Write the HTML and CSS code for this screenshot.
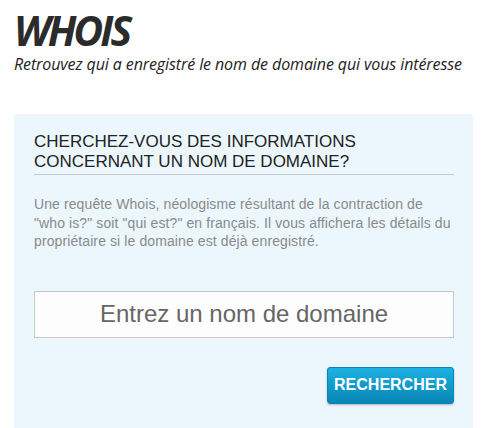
FILE: index.html
```html
<!DOCTYPE html>
<html lang="fr">
<head>
<meta charset="utf-8">
<title>Whois</title>
<link rel="stylesheet" href="styles.css">
</head>
<body>
<header class="head">
  <h1 class="title">WHOIS</h1>
  <p class="subtitle">Retrouvez qui a enregistré le nom de domaine qui vous intéresse</p>
</header>
<section class="panel">
  <h2 class="panel-title">CHERCHEZ-VOUS DES INFORMATIONS CONCERNANT UN NOM DE DOMAINE?</h2>
  <p class="panel-text">Une requête Whois, néologisme résultant de la contraction de "who is?" soit "qui est?" en français. Il vous affichera les détails du propriétaire si le domaine est déjà enregistré.</p>
  <form class="search">
    <input class="search-input" type="text" placeholder="Entrez un nom de domaine">
    <div class="actions">
      <button class="btn" type="button">RECHERCHER</button>
    </div>
  </form>
</section>
</body>
</html>
```
FILE: styles.css
```css
html, body {
  margin: 0;
  padding: 0;
  background: #fff;
}
body {
  padding: 0 18px 0 14px;
  font-family: "Liberation Sans", Arial, sans-serif;
}
.head {
  padding-top: 8px;
}
.title {
  margin: 0;
  font-family: "Open Sans", sans-serif;
  font-weight: 700;
  font-style: italic;
  font-size: 41px;
  line-height: 44px;
  letter-spacing: -3px;
  color: #2b2b2b;
}
.subtitle {
  margin: 2px 0 0;
  font-family: "Open Sans", sans-serif;
  font-style: italic;
  font-size: 16px;
  line-height: 20px;
  letter-spacing: -0.1px;
  color: #222;
}
.panel {
  margin-top: 40px;
  background: #ebf7fc;
  border-radius: 3px 3px 0 0;
  padding: 18px 19px 24px 20px;
}
.panel-title {
  margin: 0;
  font-weight: 400;
  font-size: 17px;
  line-height: 20px;
  color: #222;
  padding-bottom: 2px;
  border-bottom: 1px solid #c9c9c9;
}
.panel-text {
  margin: 20px 0 0;
  font-size: 14px;
  line-height: 18.5px;
  letter-spacing: 0.1px;
  color: #8a8a8a;
}
.search {
  margin-top: 40px;
}
.search-input {
  display: block;
  box-sizing: border-box;
  width: 100%;
  height: 47px;
  margin: 0;
  border: 1px solid #c8c8c8;
  background: #fdfdfd;
  font-family: "Liberation Sans", Arial, sans-serif;
  font-size: 24px;
  text-align: center;
  color: #555;
  outline: none;
}
.search-input::placeholder {
  color: #666;
}
.actions {
  display: flex;
  justify-content: flex-end;
  margin-top: 29px;
}
.btn {
  width: 127px;
  height: 37px;
  border: 1px solid #0a86b3;
  border-radius: 3px;
  background: linear-gradient(#1cb0e2, #0786b5);
  color: #fff;
  font-family: "Liberation Sans", Arial, sans-serif;
  font-weight: 700;
  font-size: 16px;
  box-shadow: 0 1px 2px rgba(0,0,0,0.25);
  padding: 0;
}
```
